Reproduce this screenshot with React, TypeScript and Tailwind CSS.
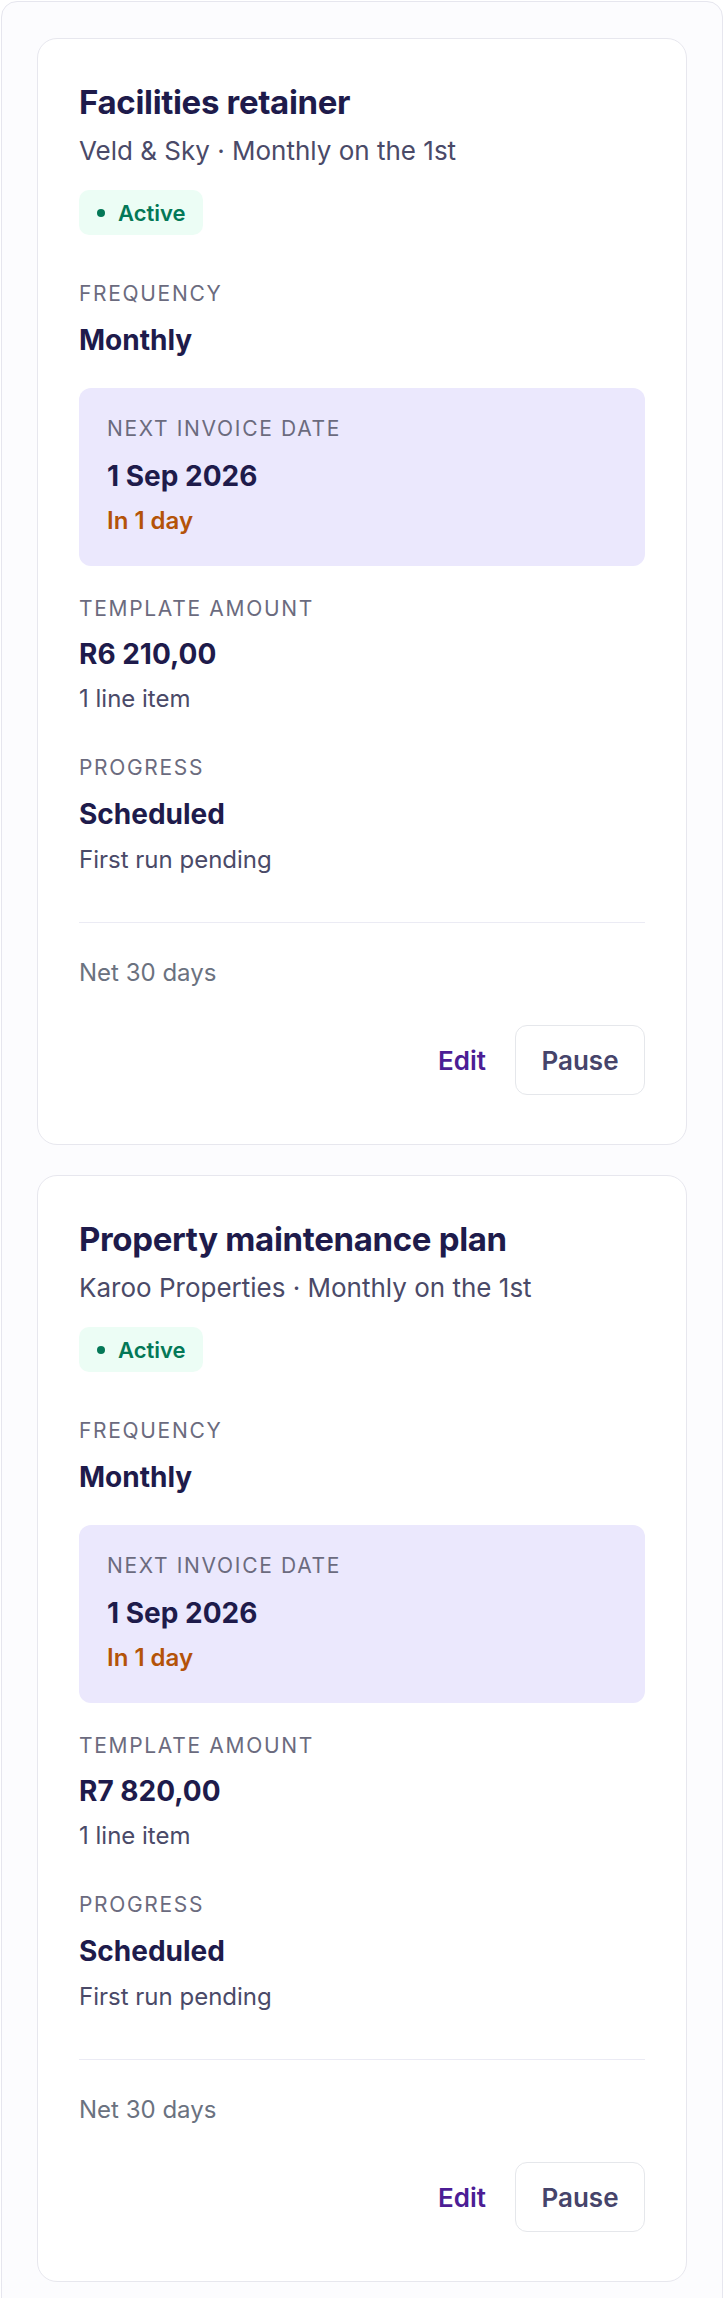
import React from "react";

type Plan = {
  title: string;
  subtitle: string;
  amount: string;
};

const plans: Plan[] = [
  { title: "Facilities retainer", subtitle: "Veld & Sky · Monthly on the 1st", amount: "R6 210,00" },
  { title: "Property maintenance plan", subtitle: "Karoo Properties · Monthly on the 1st", amount: "R7 820,00" },
];

function Label({ children }: { children: React.ReactNode }) {
  return (
    <div className="text-[21px] leading-[28px] tracking-[0.08em] uppercase text-[#6b6b7e]">{children}</div>
  );
}

function Value({ children }: { children: React.ReactNode }) {
  return <div className="text-[28px] leading-[36px] font-bold text-[#1e1b4b]">{children}</div>;
}

function Card({ plan }: { plan: Plan }) {
  return (
    <div className="bg-white border border-[#e7e7ee] rounded-[20px] px-[41px] pt-[42px] pb-[49px]">
      <h2 className="text-[33px] leading-[42px] font-bold tracking-[-0.01em] text-[#1e1b4b]">{plan.title}</h2>
      <p className="mt-[11px] text-[26px] leading-[34px] text-[#4a4a68]">{plan.subtitle}</p>
      <div className="mt-[22px] flex">
        <span className="inline-flex items-center h-[45px] pl-[18px] pr-[17px] gap-[13px] rounded-[10px] bg-[#ecfdf5] text-[#047857] text-[22px] leading-[30px] font-semibold">
          <span className="w-2 h-2 rounded-full bg-[#047857]" />
          Active
        </span>
      </div>

      <div className="mt-[45px]">
        <Label>Frequency</Label>
        <div className="mt-[14px]">
          <Value>Monthly</Value>
        </div>
      </div>

      <div className="mt-[30px] rounded-[12px] bg-[#ebe8fd] pl-[28px] pr-[28px] pt-[27px] pb-[29px]">
        <Label>Next invoice date</Label>
        <div className="mt-[15px]">
          <Value>1 Sep 2026</Value>
        </div>
        <div className="mt-[11px] text-[24px] leading-[32px] font-semibold text-[#b45309]">In 1 day</div>
      </div>

      <div className="mt-[29px]">
        <Label>Template amount</Label>
        <div className="mt-[13px]">
          <Value>{plan.amount}</Value>
        </div>
        <div className="mt-[11px] text-[24px] leading-[32px] text-[#4a4a68]">1 line item</div>
      </div>

      <div className="mt-[39px]">
        <Label>Progress</Label>
        <div className="mt-[14px]">
          <Value>Scheduled</Value>
        </div>
        <div className="mt-[12px] text-[24px] leading-[32px] text-[#4a4a68]">First run pending</div>
      </div>

      <div className="mt-[46px] h-px bg-[#ebebf4]" />

      <div className="mt-[34px] text-[24px] leading-[32px] text-[#6b7280]">Net 30 days</div>

      <div className="mt-[36px] flex justify-end items-center gap-[16px]">
        <button className="h-[70px] px-[13px] text-[26px] font-semibold text-[#4c1d95]">Edit</button>
        <button className="h-[70px] w-[130px] flex items-center justify-center rounded-[12px] border border-[#e5e7eb] bg-white text-[26px] font-semibold text-[#46446a]">
          Pause
        </button>
      </div>
    </div>
  );
}

export default function App() {
  return (
    <div className="font-['Inter','Noto_Sans',sans-serif] bg-white min-h-screen pt-px pl-px">
      <div className="w-[722px] border border-[#e6e6ee] rounded-t-[16px] bg-[#fcfcfe] pt-[36px] px-[35px] pb-[36px] flex flex-col gap-[30px]">
        {plans.map((p) => (
          <Card key={p.title} plan={p} />
        ))}
      </div>
    </div>
  );
}
